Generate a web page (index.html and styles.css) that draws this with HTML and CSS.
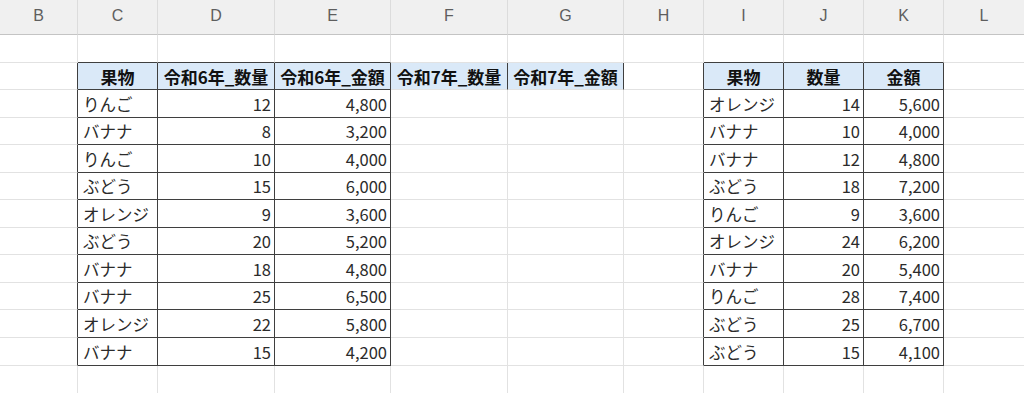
FILE: index.html
```html
<!DOCTYPE html>
<html lang="ja">
<head>
<meta charset="utf-8">
<title>Sheet</title>
<link rel="stylesheet" href="styles.css">
</head>
<body>
<div class="sheet">
  <div class="row r-head">
    <div class="c h">B</div><div class="c h">C</div><div class="c h">D</div><div class="c h">E</div><div class="c h">F</div><div class="c h">G</div><div class="c h">H</div><div class="c h">I</div><div class="c h">J</div><div class="c h">K</div><div class="c h">L</div>
  </div>
  <div class="row r28">
    <div class="c"></div><div class="c db"></div><div class="c db"></div><div class="c db"></div><div class="c"></div><div class="c"></div><div class="c"></div><div class="c db"></div><div class="c db"></div><div class="c db"></div><div class="c"></div>
  </div>
  <div class="row r27">
    <div class="c dr"></div><div class="c th dr db">果物</div><div class="c th dr db">令和6年_数量</div><div class="c th dr db">令和6年_金額</div><div class="c th dr">令和7年_数量</div><div class="c th dr">令和7年_金額</div><div class="c dr"></div><div class="c th dr db">果物</div><div class="c th dr db">数量</div><div class="c th dr db">金額</div><div class="c"></div>
  </div>
  <div class="row r28">
    <div class="c dr"></div><div class="c t dr db">りんご</div><div class="c t num dr db">12</div><div class="c t num dr db">4,800</div><div class="c"></div><div class="c"></div><div class="c dr"></div><div class="c t dr db">オレンジ</div><div class="c t num dr db">14</div><div class="c t num dr db">5,600</div><div class="c"></div>
  </div>
  <div class="row r27">
    <div class="c dr"></div><div class="c t dr db">バナナ</div><div class="c t num dr db">8</div><div class="c t num dr db">3,200</div><div class="c"></div><div class="c"></div><div class="c dr"></div><div class="c t dr db">バナナ</div><div class="c t num dr db">10</div><div class="c t num dr db">4,000</div><div class="c"></div>
  </div>
  <div class="row r28">
    <div class="c dr"></div><div class="c t dr db">りんご</div><div class="c t num dr db">10</div><div class="c t num dr db">4,000</div><div class="c"></div><div class="c"></div><div class="c dr"></div><div class="c t dr db">バナナ</div><div class="c t num dr db">12</div><div class="c t num dr db">4,800</div><div class="c"></div>
  </div>
  <div class="row r27">
    <div class="c dr"></div><div class="c t dr db">ぶどう</div><div class="c t num dr db">15</div><div class="c t num dr db">6,000</div><div class="c"></div><div class="c"></div><div class="c dr"></div><div class="c t dr db">ぶどう</div><div class="c t num dr db">18</div><div class="c t num dr db">7,200</div><div class="c"></div>
  </div>
  <div class="row r28">
    <div class="c dr"></div><div class="c t dr db">オレンジ</div><div class="c t num dr db">9</div><div class="c t num dr db">3,600</div><div class="c"></div><div class="c"></div><div class="c dr"></div><div class="c t dr db">りんご</div><div class="c t num dr db">9</div><div class="c t num dr db">3,600</div><div class="c"></div>
  </div>
  <div class="row r27">
    <div class="c dr"></div><div class="c t dr db">ぶどう</div><div class="c t num dr db">20</div><div class="c t num dr db">5,200</div><div class="c"></div><div class="c"></div><div class="c dr"></div><div class="c t dr db">オレンジ</div><div class="c t num dr db">24</div><div class="c t num dr db">6,200</div><div class="c"></div>
  </div>
  <div class="row r28">
    <div class="c dr"></div><div class="c t dr db">バナナ</div><div class="c t num dr db">18</div><div class="c t num dr db">4,800</div><div class="c"></div><div class="c"></div><div class="c dr"></div><div class="c t dr db">バナナ</div><div class="c t num dr db">20</div><div class="c t num dr db">5,400</div><div class="c"></div>
  </div>
  <div class="row r27">
    <div class="c dr"></div><div class="c t dr db">バナナ</div><div class="c t num dr db">25</div><div class="c t num dr db">6,500</div><div class="c"></div><div class="c"></div><div class="c dr"></div><div class="c t dr db">りんご</div><div class="c t num dr db">28</div><div class="c t num dr db">7,400</div><div class="c"></div>
  </div>
  <div class="row r28">
    <div class="c dr"></div><div class="c t dr db">オレンジ</div><div class="c t num dr db">22</div><div class="c t num dr db">5,800</div><div class="c"></div><div class="c"></div><div class="c dr"></div><div class="c t dr db">ぶどう</div><div class="c t num dr db">25</div><div class="c t num dr db">6,700</div><div class="c"></div>
  </div>
  <div class="row r28">
    <div class="c dr"></div><div class="c t dr db">バナナ</div><div class="c t num dr db">15</div><div class="c t num dr db">4,200</div><div class="c"></div><div class="c"></div><div class="c dr"></div><div class="c t dr db">ぶどう</div><div class="c t num dr db">15</div><div class="c t num dr db">4,100</div><div class="c"></div>
  </div>
  <div class="row r28">
    <div class="c"></div><div class="c"></div><div class="c"></div><div class="c"></div><div class="c"></div><div class="c"></div><div class="c"></div><div class="c"></div><div class="c"></div><div class="c"></div><div class="c"></div>
  </div>
  <div class="row r28">
    <div class="c"></div><div class="c"></div><div class="c"></div><div class="c"></div><div class="c"></div><div class="c"></div><div class="c"></div><div class="c"></div><div class="c"></div><div class="c"></div><div class="c"></div>
  </div>
</div>
</body>
</html>
```

FILE: styles.css
```css
html, body {
  margin: 0;
  padding: 0;
  background: #ffffff;
  overflow: hidden;
}

.sheet {
  width: 1024px;
  height: 393px;
  overflow: hidden;
  font-family: "Noto Sans CJK JP", "Noto Sans", sans-serif;
  font-size: 17px;
  color: #262626;
}

.row {
  display: grid;
  grid-template-columns: 78px 80px 117px 116px 117px 116px 80px 80px 80px 80px 81px;
}

.r-head { height: 35px; }
.r28 { height: 28px; }
.r27 { height: 27px; }

.c {
  box-sizing: border-box;
  border-right: 1px solid #e2e2e2;
  border-bottom: 1px solid #e2e2e2;
  display: flex;
  align-items: center;
  white-space: nowrap;
  overflow: hidden;
  min-width: 0;
}

.h {
  background: #f0f0f0;
  border-right-color: #dcdcdc;
  border-bottom-color: #c4c4c4;
  justify-content: center;
  color: #5e5e5e;
  font-family: "Liberation Sans", "Noto Sans", sans-serif;
  font-size: 16px;
  padding-bottom: 2px;
}

.t {
  padding: 0 3px 0 5px;
  font-size: 16.5px;
  color: #2b2b2b;
}

.num {
  justify-content: flex-end;
}

.th {
  background: #dae9f8;
  justify-content: center;
  font-weight: bold;
  font-size: 17px;
  color: #111111;
}

.dr { border-right-color: #3f3f3f; }
.db { border-bottom-color: #3f3f3f; }
```
